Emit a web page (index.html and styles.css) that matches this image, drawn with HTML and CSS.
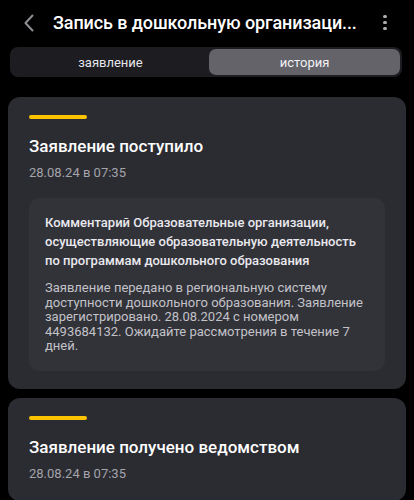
FILE: index.html
```html
<!DOCTYPE html>
<html lang="ru">
<head>
<meta charset="utf-8">
<link rel="stylesheet" href="styles.css">
</head>
<body>
<div class="header">
  <svg class="back" width="12" height="18" viewBox="0 0 12 18"><path d="M9.5 1.5 L2.5 9 L9.5 16.5" fill="none" stroke="#8e8e93" stroke-width="2" stroke-linecap="round" stroke-linejoin="round"/></svg>
  <div class="title">Запись в дошкольную организаци...</div>
  <div class="kebab"><span></span><span></span><span></span></div>
</div>
<div class="segments">
  <div class="seg">заявление</div>
  <div class="seg active">история</div>
</div>
<div class="card">
  <div class="bar"></div>
  <div class="ctitle">Заявление поступило</div>
  <div class="date">28.08.24 в 07:35</div>
  <div class="inner">
    <div class="comment">Комментарий Образовательные организации, осуществляющие образовательную деятельность по программам дошкольного образования</div>
    <div class="text">Заявление передано в региональную систему доступности дошкольного образования. Заявление зарегистрировано. 28.08.2024 с номером 4493684132. Ожидайте рассмотрения в течение 7 дней.</div>
  </div>
</div>
<div class="card">
  <div class="bar"></div>
  <div class="ctitle">Заявление получено ведомством</div>
  <div class="date">28.08.24 в 07:35</div>
</div>
</body>
</html>
```
FILE: styles.css
```css
* { box-sizing: border-box; }
body {
  margin: 0;
  background: #000;
  font-family: Roboto, "Liberation Sans", sans-serif;
  color: #fff;
}
.header {
  height: 47px;
  display: flex;
  align-items: center;
  padding: 0 0 2px 23px;
}
.back { flex: none; }
.title {
  margin-left: 18px;
  font-size: 18px;
  font-weight: 500;
  letter-spacing: -0.1px;
  white-space: nowrap;
  overflow: hidden;
  min-width: 0;
  flex: 1;
}
.kebab {
  flex: none;
  width: 4px;
  display: flex;
  flex-direction: column;
  gap: 2.5px;
  margin-right: 27px;
}
.kebab span {
  width: 3.5px;
  height: 3.5px;
  border-radius: 50%;
  background: #aeaeb2;
}
.segments {
  margin: 0 12px 0 10px;
  height: 30px;
  background: #1c1c21;
  border-radius: 8px;
  padding: 2px;
  display: flex;
}
.seg {
  flex: 1;
  display: flex;
  align-items: center;
  justify-content: center;
  font-size: 13px;
  color: #e5e5ea;
  border-radius: 7px;
}
.seg.active {
  flex: 0 0 191px;
  background: #636369;
  color: #f2f2f7;
}
.card {
  margin: 20px 8px 0 8px;
  background: #2b2b32;
  border-radius: 12px;
  padding: 18px 21px 18px 21px;
}
.card + .card { margin-top: 9px; }
.bar {
  width: 58px;
  height: 4px;
  border-radius: 2px;
  background: #fcc300;
}
.ctitle {
  margin-top: 16px;
  font-size: 17px;
  line-height: 22px;
  font-weight: 500;
  color: #fff;
}
.date {
  margin-top: 7px;
  font-size: 13px;
  line-height: 18px;
  color: #a3a3aa;
}
.inner {
  margin-top: 16px;
  background: #323239;
  border-radius: 11px;
  padding: 15px 16px 17px 16px;
}
.comment {
  font-size: 13px;
  line-height: 19px;
  font-weight: 500;
  color: #e9e9ee;
}
.text {
  margin-top: 11px;
  font-size: 13px;
  line-height: 14.6px;
  color: #c2c2c8;
}
```
